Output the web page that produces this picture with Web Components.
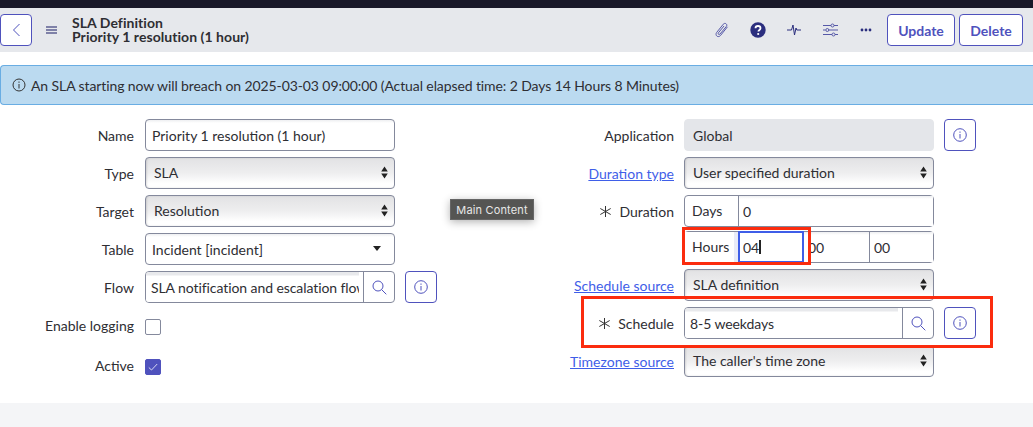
<!DOCTYPE html>
<html lang="en">
<head>
<meta charset="utf-8">
<title>SLA Definition</title>
<style>
  html, body { margin: 0; padding: 0; }
  body { width: 1033px; height: 427px; overflow: hidden; background: #fff; font-family: Lato, "Open Sans", sans-serif; font-size: 14px; color: #2e2e33; position: relative; }
</style>
</head>
<body>
<sla-page>
  <sla-header slot="header" title-top="SLA Definition" title-bottom="Priority 1 resolution (1 hour)"></sla-header>
  <sla-banner slot="banner">An SLA starting now will breach on 2025-03-03 09:00:00 (Actual elapsed time: 2 Days 14 Hours 8 Minutes)</sla-banner>

  <form-col slot="left">
    <form-row label="Name" label-width="134"><sn-input>Priority 1 resolution (1 hour)</sn-input></form-row>
    <form-row label="Type" label-width="134"><sn-select>SLA</sn-select></form-row>
    <form-row label="Target" label-width="134"><sn-select>Resolution</sn-select></form-row>
    <form-row label="Table" label-width="134"><sn-input caret>Incident [incident]</sn-input></form-row>
    <form-row label="Flow" label-width="134"><sn-lookup>SLA notification and escalation flow</sn-lookup><info-btn slot="after"></info-btn></form-row>
    <form-row label="Enable logging" label-width="134" compact><sn-check></sn-check></form-row>
    <form-row label="Active" label-width="134" compact><sn-check checked></sn-check></form-row>
  </form-col>

  <form-col slot="right">
    <form-row label="Application" label-width="157"><sn-input readonly>Global</sn-input><info-btn slot="after"></info-btn></form-row>
    <form-row label="Duration type" label-width="157" link><sn-select>User specified duration</sn-select></form-row>
    <form-row label="Duration" label-width="157" required tight><sn-duration label="Days" first="0"></sn-duration></form-row>
    <form-row label-width="157"><sn-duration label="Hours" first="04" focused second="00" third="00"></sn-duration></form-row>
    <form-row label="Schedule source" label-width="157" link><sn-select>SLA definition</sn-select></form-row>
    <form-row label="Schedule" label-width="157" required><sn-lookup>8-5 weekdays</sn-lookup><info-btn slot="after"></info-btn></form-row>
    <form-row label="Timezone source" label-width="157" link><sn-select>The caller's time zone</sn-select></form-row>
  </form-col>

  <hint-tip slot="overlay" style="left:450px;top:199px">Main Content</hint-tip>
  <mark-box slot="overlay" style="left:682px;top:227px;width:129px;height:38px"></mark-box>
  <mark-box slot="overlay" style="left:581px;top:296px;width:412px;height:52px"></mark-box>
</sla-page>

<script>
// small helper so every element sets up its open shadow root the same way
class BaseEl extends HTMLElement {
  render(html) {
    if (!this.shadowRoot) this.attachShadow({ mode: 'open' });
    this.shadowRoot.innerHTML = html;
  }
}

class SlaPage extends BaseEl {
  connectedCallback() {
    this.render(`
      <style>
        :host { display: block; width: 1033px; height: 427px; position: relative; }
        .top { height: 8px; background: #191929; }
        .form { display: grid; grid-template-columns: 517px 516px; height: 298px; padding-top: 14px; box-sizing: border-box; }
        .foot { height: 24px; background: #f4f5f7; }
      </style>
      <div class="top"></div>
      <slot name="header"></slot>
      <slot name="banner"></slot>
      <div class="form"><slot name="left"></slot><slot name="right"></slot></div>
      <div class="foot"></div>
      <slot name="overlay"></slot>
    `);
  }
}

class SlaHeader extends BaseEl {
  connectedCallback() {
    this.render(`
      <style>
        :host { display: flex; align-items: center; height: 44px; background: #e6e8ec; }
        button { font: 700 14px Lato, sans-serif; color: #4f52bd; background: #fff; border: 1px solid #4f52bd; border-radius: 4px; height: 32px; padding: 0; box-sizing: border-box; }
        .back { width: 32px; display: flex; align-items: center; justify-content: center; }
        .menu { margin-left: 14px; width: 11px; display: flex; }
        .title { margin-left: 15px; font-weight: 700; font-size: 14px; line-height: 14px; color: #2e2e33; letter-spacing: .05px; }
        .icons { margin-left: auto; display: flex; align-items: center; }
        .icons svg { display: block; flex: none; }
        .update { width: 68px; margin-left: 15px; }
        .delete { width: 64px; margin-left: 4px; margin-right: 10px; }
      </style>
      <button class="back" aria-label="Back"><svg width="9" height="14" viewBox="0 0 9 14" fill="none" stroke="#4f52bd"><path d="M7.5 1 1.500 7l6 6"/></svg></button>
      <div class="menu"><svg width="11" height="8" viewBox="0 0 11 8" fill="#7f81a8"><rect width="11" height="2"/><rect y="3" width="11" height="2"/><rect y="6" width="11" height="2"/></svg></div>
      <div class="title">${this.getAttribute('title-top')}<br>${this.getAttribute('title-bottom')}</div>
      <div class="icons">
        <svg width="14" height="17" viewBox="0 0 14 17" fill="none" stroke="#5659a8" stroke-width="1"><path d="M12.500 4.800 5.600 13.400c-1 1.300-2.700 1.500-3.700.7-1-.8-1.200-2.400-.2-3.700l6.600-8.200c.7-.9 2-1.100 2.800-.4.800.6 1 1.800.2 2.700L5 12c-.4.500-1.100.6-1.500.3-.4-.3-.5-1-.1-1.500L9 4"/></svg>
        <svg style="margin-left:21px" width="16" height="16" viewBox="0 0 16 16"><circle cx="8" cy="8" r="7.700" fill="#2b2e7e"/><path d="M5.500 6.300C5.500 4.900 6.600 4 8 4s2.500.9 2.500 2.200c0 1.100-.7 1.500-1.300 2-.5.4-.8.7-.8 1.300" fill="none" stroke="#fff" stroke-width="1.800"/><circle cx="8.200" cy="12" r="1.100" fill="#fff"/></svg>
        <svg style="margin-left:21px" width="14" height="14" viewBox="0 0 14 14" fill="none" stroke="#2b2e7e" stroke-width="1"><path d="M0 7h4.500L6 2l1.500 10L9 5l.8 2H14"/></svg>
        <svg style="margin-left:22px" width="15" height="14" viewBox="0 0 15 14" fill="none" stroke="#5659a8" stroke-width="1"><path d="M0 2.500h8M11 2.500h4M0 7h2.500M6 7h9M0 11.500h9M12 11.500h3"/><circle cx="9.500" cy="2.500" r="1.500"/><circle cx="4.300" cy="7" r="1.500"/><circle cx="10.500" cy="11.500" r="1.500"/></svg>
        <svg style="margin-left:22px" width="12" height="4" viewBox="0 0 12 4" fill="#2b2e7e"><circle cx="2" cy="2" r="1.400"/><circle cx="6" cy="2" r="1.400"/><circle cx="10" cy="2" r="1.400"/></svg>
      </div>
      <button class="update">Update</button>
      <button class="delete">Delete</button>
    `);
  }
}

class SlaBanner extends BaseEl {
  connectedCallback() {
    this.render(`
      <style>
        :host { display: flex; align-items: center; box-sizing: border-box; height: 40px; margin-top: 13px; padding-left: 11px; background: #bbdaf0; border-top: 1px solid #69ade3; border-bottom: 1px solid #69ade3; border-left: 1px solid #69ade3; border-top-left-radius: 4px; border-bottom-left-radius: 4px; color: #2e2e33; font-size: 14px; letter-spacing: -.1px; gap: 5px; }
        svg { flex: none; }
      </style>
      <svg width="14" height="14" viewBox="0 0 14 14" fill="none" stroke="#333"><circle cx="7" cy="7" r="6"/><path d="M7 6v4.500"/><path d="M7 3.500v1.300"/></svg>
      <span><slot></slot></span>
    `);
  }
}

class FormCol extends BaseEl {
  connectedCallback() {
    this.render(`
      <style>:host { display: flex; flex-direction: column; }</style>
      <slot></slot>
    `);
  }
}

class FormRow extends BaseEl {
  connectedCallback() {
    const label = this.getAttribute('label') || '';
    const link = this.hasAttribute('link');
    const req = this.hasAttribute('required');
    const compact = this.hasAttribute('compact');
    const width = this.getAttribute('label-width');
    const gap = width === '134' ? 11 : 10;
    const bottom = this.hasAttribute('tight') ? 4 : 6;
    this.render(`
      <style>
        :host { display: flex; align-items: center; min-height: 32px; margin-bottom: ${bottom}px; padding: ${compact ? '2px 0 0' : '0'}; }
        .lab { width: ${width}px; margin-right: ${gap}px; margin-bottom: ${compact ? '3px' : '0'}; flex: none; text-align: right; display: flex; justify-content: flex-end; align-items: center; gap: 7px; color: #2e2e33; font-size: 14px; }
        a { color: #3f5ee8; text-decoration: underline; }
        .field { width: 250px; flex: none; }
        ::slotted([slot=after]) { margin-left: 10px; }
      </style>
      <div class="lab">
        ${req ? '<svg width="13" height="13" viewBox="0 0 13 13" fill="none" stroke="#333"><path d="M6.500 1v11M1.300 3.500l10.400 6M11.700 3.500l-10.400 6"/></svg>' : ''}
        ${link ? `<a href="#">${label}</a>` : `<span>${label}</span>`}
      </div>
      <div class="field"><slot></slot></div>
      <slot name="after"></slot>
    `);
  }
}

class SnInput extends BaseEl {
  connectedCallback() {
    const ro = this.hasAttribute('readonly');
    const caret = this.hasAttribute('caret');
    this.render(`
      <style>
        :host { display: flex; align-items: center; justify-content: space-between; box-sizing: border-box; height: 32px; padding: 0 ${caret ? '13px' : '7px'} 0 ${ro ? '8px' : '6px'}; border-radius: 4px; font-size: 14px; color: #2e2e33;
          border: 1px solid ${ro ? '#e4e6ea' : '#84899c'}; background: ${ro ? '#e4e6ea' : 'linear-gradient(#eeeff1 0, #fff 3px)'}; }
        i { width: 0; height: 0; margin-bottom: 2px; border: 4.5px solid transparent; border-top: 5px solid #222; border-bottom: 0; }
      </style>
      <span><slot></slot></span>${caret ? '<i></i>' : ''}
    `);
  }
}

class SnSelect extends BaseEl {
  connectedCallback() {
    this.render(`
      <style>
        :host { display: flex; align-items: center; justify-content: space-between; box-sizing: border-box; height: 32px; padding: 0 6px 1px 8px; border: 1px solid #84899c; border-radius: 4px; font-size: 14px; color: #2e2e33;
          background: linear-gradient(#e2e2e4 0, #eeeeef 50%, #fff 85%); box-shadow: inset 1px 0 2px rgba(0,0,0,.12); }
        svg { flex: none; }
      </style>
      <span><slot></slot></span>
      <svg width="7" height="13" viewBox="0 0 7 13" fill="#222"><path d="M3.500 .5 6.800 5.500H.2zM3.500 12.500 .2 7.500h6.600z"/></svg>
    `);
  }
}

class SnLookup extends BaseEl {
  connectedCallback() {
    this.render(`
      <style>
        :host { display: flex; box-sizing: border-box; height: 32px; border: 1px solid #84899c; border-radius: 4px; font-size: 14px; color: #2e2e33; overflow: hidden; background: #fff; }
        .txt { flex: 1; min-width: 0; display: flex; align-items: center; margin-right: 4px; padding-left: 5px; white-space: nowrap; overflow: hidden; letter-spacing: -.08px; background: linear-gradient(#e8e9ec 0, #e8e9ec 3px, #fff 4px); }
        .btn { flex: none; width: 31px; box-sizing: border-box; border-left: 1px solid #84899c; display: flex; align-items: center; justify-content: center; }
      </style>
      <div class="txt"><slot></slot></div>
      <div class="btn"><svg width="15" height="15" viewBox="0 0 15 15" fill="none" stroke="#4f52bd"><circle cx="6" cy="6" r="5"/><path d="m9.700 9.700 4.600 4.600"/></svg></div>
    `);
  }
}

class InfoBtn extends BaseEl {
  connectedCallback() {
    this.render(`
      <style>
        :host { display: flex; align-items: center; justify-content: center; box-sizing: border-box; width: 32px; height: 32px; flex: none; border: 1px solid #4f52bd; border-radius: 4px; background: #fff; }
      </style>
      <svg width="14" height="14" viewBox="0 0 14 14" fill="none" stroke="#4f52bd"><circle cx="7" cy="7" r="6.300"/><path d="M7 6v4.500M7 3.500v1.300"/></svg>
    `);
  }
}

class SnCheck extends BaseEl {
  connectedCallback() {
    const on = this.hasAttribute('checked');
    this.render(`
      <style>
        :host { display: flex; align-items: center; justify-content: center; box-sizing: border-box; width: 16px; height: 16px; border-radius: 2px; border: 1px solid ${on ? '#4f52bd' : '#84899c'}; background: ${on ? '#4f52bd' : '#fff'}; }
      </style>
      ${on ? '<svg width="10" height="8" viewBox="0 0 10 8" fill="none" stroke="#d8d9f2"><path d="M.8 4.500 3.500 7 9.200 1"/></svg>' : ''}
    `);
  }
}

class SnDuration extends BaseEl {
  connectedCallback() {
    const second = this.getAttribute('second');
    const third = this.getAttribute('third');
    const focused = this.hasAttribute('focused');
    const cell = (v, cls = '') => `<div class="cell ${cls}">${v}</div>`;
    this.render(`
      <style>
        :host { display: flex; box-sizing: border-box; height: 32px; border: 1px solid #84899c; border-radius: 4px; background: #fff; font-size: 14px; color: #2e2e33; }
        .lab { width: 53px; flex: none; box-sizing: border-box; padding: 0 0 1px 7px; display: flex; align-items: center; }
        .cell { flex: 1; min-width: 0; box-sizing: border-box; border-left: 1px solid #84899c; padding-left: 4px; display: flex; align-items: center; background: linear-gradient(#eeeff1 0, #fff 3px); }
        .focus { flex: none; width: 66px; margin: -1px 0; border: 1px solid #3f5ee8; outline: 1px solid #3f5ee8; outline-offset: -2px; padding-left: 4px; background: #fff; }
        .n2 { flex: none; width: 65px; border-left: 0; padding-left: 4px; }
        .n3 { padding-left: 4px; }
        b { display: inline-block; width: 2px; height: 14px; background: #222; margin-left: 0; }
      </style>
      <div class="lab" ${focused ? 'style="background:linear-gradient(to right,#fff 49px,#e9ebf8 49px)"' : ''}>${this.getAttribute('label')}</div>
      ${cell(this.getAttribute('first') + (focused ? '<b></b>' : ''), focused ? 'focus' : '')}
      ${second ? cell(second, 'n2') : ''}
      ${third ? cell(third, 'n3') : ''}
    `);
  }
}

class HintTip extends BaseEl {
  connectedCallback() {
    this.render(`
      <style>
        :host { position: absolute; display: flex; align-items: center; justify-content: center; box-sizing: border-box; width: 84px; height: 21px; background: #555553; color: #e8e8e8; font: 11px Inter, "Open Sans", sans-serif; letter-spacing: .15px; box-shadow: 0 2px 8px rgba(0,0,0,.3); border: 1px solid #666; }
      </style>
      <slot></slot>
    `);
  }
}

class MarkBox extends BaseEl {
  connectedCallback() {
    this.render(`
      <style>
        :host { position: absolute; box-sizing: border-box; border: 3px solid #fb2c0e; pointer-events: none; }
      </style>
    `);
  }
}

customElements.define('sla-page', SlaPage);
customElements.define('sla-header', SlaHeader);
customElements.define('sla-banner', SlaBanner);
customElements.define('form-col', FormCol);
customElements.define('form-row', FormRow);
customElements.define('sn-input', SnInput);
customElements.define('sn-select', SnSelect);
customElements.define('sn-lookup', SnLookup);
customElements.define('info-btn', InfoBtn);
customElements.define('sn-check', SnCheck);
customElements.define('sn-duration', SnDuration);
customElements.define('hint-tip', HintTip);
customElements.define('mark-box', MarkBox);
</script>
</body>
</html>
